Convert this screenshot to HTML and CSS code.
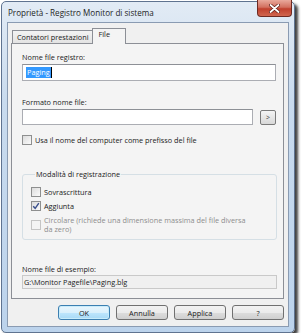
FILE: index.html
```html
<!DOCTYPE html>
<html lang="it">
<head>
  <meta charset="UTF-8">
  <title>Proprietà - Registro Monitor di sistema</title>
  <link rel="stylesheet" href="styles.css">
</head>
<body>
  <section class="window">
    <div class="titlebar">
      <span class="title">Proprietà - Registro Monitor di sistema</span>
      <button type="button" class="close">
        <svg width="11" height="9" viewBox="0 0 11 9">
          <path d="M1.5 1 L9.5 8 M9.5 1 L1.5 8" stroke="#5a1a14" stroke-width="3.2" stroke-linecap="round"/>
          <path d="M1.5 1 L9.5 8 M9.5 1 L1.5 8" stroke="#fff" stroke-width="1.8" stroke-linecap="round"/>
        </svg>
      </button>
    </div>
    <div class="client">
      <div class="tabs">
        <span class="tab">Contatori prestazioni</span>
        <span class="tab active">File</span>
      </div>
      <div class="panel">
        <label class="line">Nome file registro:</label>
        <div class="input first"><span class="sel">Paging</span><span class="caret"></span></div>
        <label class="line gap-label">Formato nome file:</label>
        <div class="row">
          <div class="input second"></div>
          <button type="button" class="small-btn">&gt;</button>
        </div>
        <div class="check-row top-check">
          <span class="box"></span>
          <span>Usa il nome del computer come prefisso del file</span>
        </div>
        <fieldset class="group">
          <legend>Modalità di registrazione</legend>
          <div class="check-row">
            <span class="box"></span>
            <span>Sovrascrittura</span>
          </div>
          <div class="check-row">
            <span class="box checked">
              <svg width="8" height="8" viewBox="0 0 8 8"><path d="M1.2 4.2 L3.2 6.3 L6.8 1.2" fill="none" stroke="#3a4f8c" stroke-width="1.4"/></svg>
            </span>
            <span>Aggiunta</span>
          </div>
          <div class="check-row disabled">
            <span class="box"></span>
            <span class="two-lines">Circolare (richiede una dimensione massima del file diversa<br>da zero)</span>
          </div>
        </fieldset>
        <label class="line example-label">Nome file di esempio:</label>
        <div class="readonly">G:\Monitor Pagefile\Paging.blg</div>
      </div>
      <div class="buttons">
        <button type="button" class="btn default">OK</button>
        <button type="button" class="btn">Annulla</button>
        <button type="button" class="btn">Applica</button>
        <button type="button" class="btn">?</button>
      </div>
    </div>
  </section>
</body>
</html>
```

FILE: styles.css
```css
* {
  box-sizing: border-box;
}

body {
  margin: 0;
  padding-top: 1px;
  background: #fff;
  font-family: "Open Sans", "Noto Sans", sans-serif;
  font-size: 7.3px;
  color: #1a1a1a;
}

.window {
  margin-left: 1px;
  width: 294px;
  height: 332px;
  border: 1px solid #5f7390;
  border-radius: 5px;
  padding: 0 5px 5px;
  background: linear-gradient(#e2ebf5, #c9dbee 30%, #bcd3ec);
  box-shadow: 3px 3px 3px rgba(0, 0, 0, 0.75);
}

.titlebar {
  height: 20px;
  display: flex;
  justify-content: space-between;
  align-items: flex-start;
}

.title {
  font-size: 8.1px;
  line-height: 10px;
  margin-top: 6px;
  margin-left: 1px;
  color: #1e1e1e;
}

.close {
  width: 35px;
  height: 17px;
  margin-top: -2px;
  margin-right: -3px;
  padding: 0;
  border: 1px solid #6e2a22;
  border-top: 0;
  border-radius: 0 0 4px 4px;
  background: linear-gradient(#e9a99c, #d2705f 45%, #c0402d 55%, #d0664f);
  display: flex;
  align-items: center;
  justify-content: center;
}

.client {
  height: 305px;
  border: 1px solid #8a9bb2;
  background: #f0f0f0;
  padding: 5px 0 0 3px;
}

.tabs {
  display: flex;
  align-items: flex-end;
  height: 15px;
  padding-left: 1px;
  position: relative;
  z-index: 1;
}

.tab {
  height: 13px;
  line-height: 12px;
  padding: 0 4px;
  border: 1px solid #8c8f96;
  border-bottom: 0;
  background: linear-gradient(#f3f3f3, #e3e3e3);
}

.tab.active {
  height: 16px;
  margin-bottom: -1px;
  margin-left: -1px;
  width: 34px;
  line-height: 11px;
  padding-left: 5px;
  background: #f4f4f4;
}

.panel {
  width: 273px;
  height: 256px;
  border: 1px solid #8c8f96;
  background: #f4f4f4;
  padding: 8px 7px 0 10px;
  display: flex;
  flex-direction: column;
}

.line {
  display: block;
  height: 10px;
  line-height: 10px;
}

.input {
  height: 17px;
  margin-top: 2px;
  border: 1px solid #abadb3;
  border-top-color: #8d9096;
  background: #fff;
  display: flex;
  align-items: center;
  padding-left: 3px;
}

.sel {
  background: #3399ff;
  color: #fff;
  line-height: 11px;
  padding: 0 1px;
}

.caret {
  width: 1px;
  height: 11px;
  background: #000;
}

.gap-label {
  margin-top: 16px;
}

.row {
  display: flex;
  align-items: center;
  margin-top: 2px;
  gap: 7px;
}

.input.second {
  margin-top: 0;
  width: 233px;
  height: 16px;
}

.small-btn {
  width: 16px;
  height: 15px;
  padding: 0;
  font: inherit;
  font-size: 7px;
  color: #333;
  border: 1px solid #7a7a7a;
  border-radius: 2px;
  background: linear-gradient(#f4f4f4, #e6e6e6 50%, #d8d8d8);
}

.check-row {
  display: flex;
  align-items: center;
  height: 10px;
  line-height: 10px;
  gap: 3px;
}

.top-check {
  margin-top: 10px;
}

.box {
  width: 10px;
  height: 10px;
  flex-shrink: 0;
  border: 1px solid #8e8f8f;
  background: linear-gradient(135deg, #dcdcdc, #fafafa);
  display: flex;
  align-items: center;
  justify-content: center;
}

.group {
  margin: 24px 0 0;
  width: 255px;
  height: 71px;
  border: 1px solid #d5dfe5;
  border-radius: 3px;
  padding: 8px 0 0 8px;
  display: flex;
  flex-direction: column;
  gap: 4px;
}

.group legend {
  padding: 0 1px;
  margin-left: 4px;
  line-height: 10px;
}

.check-row.disabled {
  color: #8d8d8d;
  height: 18px;
  margin-top: 1px;
}

.disabled .box {
  border-color: #c5c5c5;
  background: #f4f4f4;
}

.two-lines {
  line-height: 9px;
}

.example-label {
  margin-top: 24px;
}

.readonly {
  margin-top: 1px;
  width: 255px;
  height: 14px;
  line-height: 12px;
  border: 1px solid #c9c9c9;
  background: #f0f0f0;
  padding-left: 1px;
}

.buttons {
  display: flex;
  justify-content: flex-end;
  gap: 6px;
  margin-top: 6px;
  padding-right: 4px;
}

.btn {
  width: 52px;
  height: 15px;
  padding: 0;
  font: inherit;
  color: #1a1a1a;
  border: 1px solid #707070;
  border-radius: 3px;
  background: linear-gradient(#f2f2f2, #ebebeb 50%, #dddddd 51%, #cfcfcf);
}

.btn.default {
  border-color: #3c7fb1;
  background: linear-gradient(#eaf6fd, #d9f0fc 50%, #bee6fd 51%, #a7d9f5);
  box-shadow: inset 0 0 0 1px #c8ecfb;
}
```
